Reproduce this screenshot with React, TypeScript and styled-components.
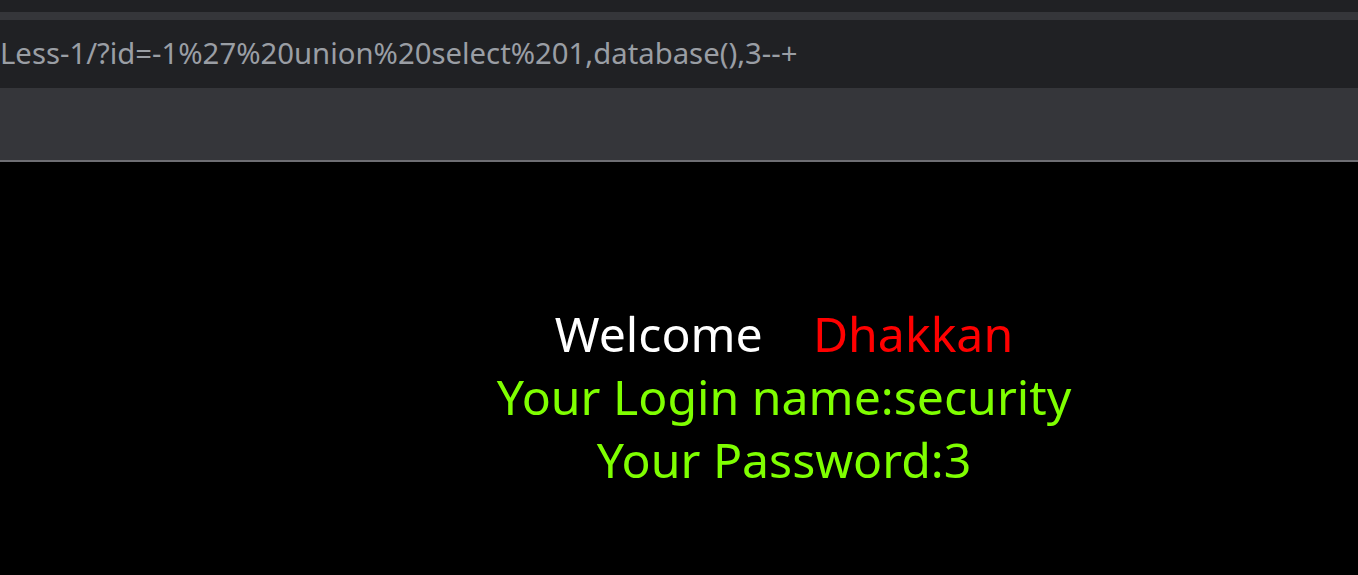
import React from "react";
import styled, { createGlobalStyle } from "styled-components";

const GlobalStyle = createGlobalStyle`
  html, body {
    margin: 0;
    padding: 0;
    background: #000;
    overflow: hidden;
  }
  body {
    font-family: "Noto Sans", "Open Sans", sans-serif;
  }
`;

const Chrome = styled.div`
  display: flex;
  flex-direction: column;
  background: #202124;
`;

const Stripe = styled.div<{ $h: number; $bg: string }>`
  height: ${(p) => p.$h}px;
  background: ${(p) => p.$bg};
`;

const AddressBar = styled.div`
  height: 68px;
  display: flex;
  align-items: center;
  background: #202124;
  color: #9a9ea4;
  font-size: 29.3px;
  white-space: nowrap;
  padding-bottom: 2px;
  box-sizing: border-box;
`;

const Page = styled.div`
  height: 413px;
  background: #000;
  display: flex;
  flex-direction: column;
  align-items: center;
  padding-top: 140px;
  padding-left: 210px;
  box-sizing: border-box;
`;

const Line = styled.div<{ $color: string }>`
  color: ${(p) => p.$color};
  font-size: 48.2px;
  line-height: 63px;
  white-space: pre;
`;

const Name = styled.span`
  color: #ff0000;
`;

export default function App() {
  return (
    <>
      <GlobalStyle />
      <Chrome>
        <Stripe $h={12} $bg="#202124" />
        <Stripe $h={8} $bg="#35363a" />
        <AddressBar>Less-1/?id=-1%27%20union%20select%201,database(),3--+</AddressBar>
        <Stripe $h={72} $bg="#35363a" />
        <Stripe $h={2} $bg="#6e6e73" />
      </Chrome>
      <Page>
        <Line $color="#ffffff">
          {"Welcome    "}
          <Name>Dhakkan</Name>
        </Line>
        <Line $color="#7fff00">Your Login name:security</Line>
        <Line $color="#7fff00">Your Password:3</Line>
      </Page>
    </>
  );
}
